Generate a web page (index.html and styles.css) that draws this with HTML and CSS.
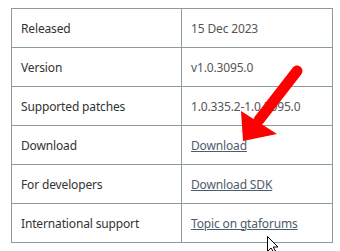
FILE: index.html
```html
<!DOCTYPE html>
<html>
<head>
<meta charset="utf-8">
<link rel="stylesheet" href="styles.css">
</head>
<body>
<div class="wrap">
<table class="info">
<tr><th>Released</th><td>15 Dec 2023</td></tr>
<tr><th>Version</th><td>v1.0.3095.0</td></tr>
<tr><th>Supported patches</th><td>1.0.335.2-1.0.3095.0</td></tr>
<tr><th>Download</th><td><a href="#">Download</a></td></tr>
<tr><th>For developers</th><td><a href="#">Download SDK</a></td></tr>
<tr><th>International support</th><td><a href="#">Topic on gtaforums</a></td></tr>
</table>
<svg class="arrow" width="340" height="251" viewBox="0 0 340 251">
<line x1="297" y1="71" x2="259" y2="120" stroke="#f00" stroke-width="11" stroke-linecap="round"/>
<polygon points="241,111 277,134 243,141" fill="#f00"/>
</svg>
<svg class="cursor" width="14" height="16" viewBox="0 0 14 16">
<path d="M0.5 0.5 L0.5 15.5 L4 12 L6.5 16 L8.5 15 L6.2 11 L11 11 Z" fill="#fff" stroke="#000" stroke-width="1"/>
</svg>
</div>
</body>
</html>
```
FILE: styles.css
```css
html, body {
  margin: 0;
  padding: 0;
  background: #fff;
}
.wrap {
  position: relative;
  width: 340px;
  height: 251px;
  padding: 8px 0 0 11px;
  box-sizing: border-box;
  overflow: hidden;
}
.info {
  border-collapse: collapse;
  width: 322px;
  font-family: "Noto Sans", "Open Sans", sans-serif;
  font-size: 12px;
  letter-spacing: -0.15px;
}
.info th, .info td {
  border: 1px solid #8c9b9d;
  height: 39px;
  padding: 0 0 0 9px;
  text-align: left;
  vertical-align: middle;
  box-sizing: border-box;
}
.info th {
  width: 170px;
  font-weight: normal;
  color: #333;
}
.info td {
  color: #555;
}
.info a {
  color: #4f5b6b;
  text-decoration: underline;
}
.arrow {
  position: absolute;
  left: 0;
  top: 0;
  pointer-events: none;
}
.cursor {
  position: absolute;
  left: 267px;
  top: 236px;
}
```
